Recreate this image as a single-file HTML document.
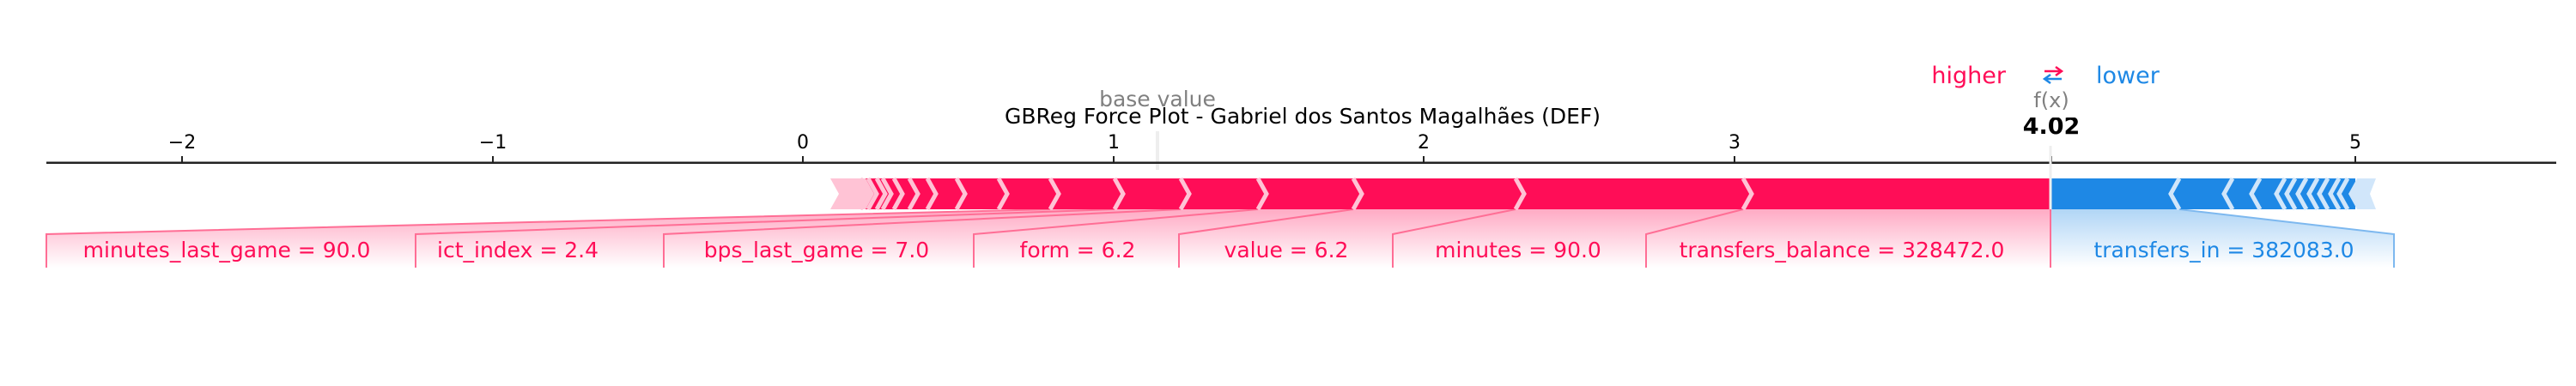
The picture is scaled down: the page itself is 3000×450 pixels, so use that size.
<!DOCTYPE html>
<html><head><meta charset="utf-8"><style>
html,body{margin:0;padding:0;background:#fff;}
svg{display:block;}
text{font-family:"DejaVu Sans","Liberation Sans",sans-serif;}
</style></head><body>
<svg width="3000" height="450" viewBox="0 0 3000 450" xmlns="http://www.w3.org/2000/svg">
<defs>
<linearGradient id="rg" gradientUnits="userSpaceOnUse" x1="0" y1="244" x2="0" y2="312">
<stop offset="0" stop-color="#ff0d57" stop-opacity="0.35"/><stop offset="1" stop-color="#ff0d57" stop-opacity="0"/></linearGradient>
<linearGradient id="bg" gradientUnits="userSpaceOnUse" x1="0" y1="244" x2="0" y2="312">
<stop offset="0" stop-color="#1e88e5" stop-opacity="0.35"/><stop offset="1" stop-color="#1e88e5" stop-opacity="0"/></linearGradient>
<clipPath id="cl"><rect x="2300" y="137" width="200" height="40"/></clipPath>
</defs>

<text x="2336" y="97" font-size="27" fill="#ff0d57" text-anchor="end">higher</text>
<text x="2441" y="97" font-size="27" fill="#1e88e5">lower</text>
<path d="M2381 83 H2400 M2394 78 L2401 83 L2394 88" stroke="#ff0d57" stroke-width="2.5" fill="none"/>
<path d="M2401 92 H2382 M2388 87 L2381 92 L2388 97" stroke="#1e88e5" stroke-width="2.5" fill="none"/>
<text x="2389" y="125" font-size="24" fill="#808080" text-anchor="middle">f(x)</text>
<text x="2389" y="156" font-size="27" font-weight="bold" fill="#000" text-anchor="middle" clip-path="url(#cl)">4.02</text>

<text x="1348" y="124" font-size="25" fill="#808080" text-anchor="middle">base value</text>
<text x="1517" y="144" font-size="25" fill="#000" text-anchor="middle" textLength="694" lengthAdjust="spacingAndGlyphs">GBReg Force Plot - Gabriel dos Santos Magalhães (DEF)</text>

<rect x="1346" y="153" width="4" height="45" fill="#eeeeee"/>

<rect x="54" y="188.5" width="2923" height="2.5" fill="#222"/>
<g stroke="#222" stroke-width="2">
<path d="M212 182V189M574 182V189M935 182V189M1297 182V189M1658 182V189M2020 182V189M2743 182V189M2389 182V189"/>
</g>
<g font-size="22" fill="#000" text-anchor="middle">
<text x="212" y="173">−2</text><text x="574" y="173">−1</text><text x="935" y="173">0</text>
<text x="1297" y="173">1</text><text x="1658" y="173">2</text><text x="2020" y="173">3</text><text x="2743" y="173">5</text>
</g>

<g fill="url(#rg)">
<polygon points="54,312 54,273 1223,244 1298,244 484,273 484,312"/>
<polygon points="484,312 484,273 1298,244 1375,244 773,273 773,312"/>
<polygon points="773,312 773,273 1375,244 1465,244 1134,273 1134,312"/>
<polygon points="1134,312 1134,273 1465,244 1576,244 1373,273 1373,312"/>
<polygon points="1373,312 1373,273 1576,244 1765,244 1622,273 1622,312"/>
<polygon points="1622,312 1622,273 1765,244 2030,244 1917,273 1917,312"/>
<polygon points="1917,312 1917,273 2030,244 2388,244 2388,312"/>
</g>
<polygon fill="url(#bg)" points="2388,244 2538,244 2788,273 2788,312 2388,312"/>
<g fill="none" stroke="#ff6e95" stroke-width="2">
<polyline points="1223,244 54,273 54,312"/>
<polyline points="1298,244 484,273 484,312"/>
<polyline points="1375,244 773,273 773,312"/>
<polyline points="1465,244 1134,273 1134,312"/>
<polyline points="1576,244 1373,273 1373,312"/>
<polyline points="1765,244 1622,273 1622,312"/>
<polyline points="2030,244 1917,273 1917,312"/>
<polyline points="2388,244 2388,312"/>
</g>
<polyline fill="none" stroke="#7db8ef" stroke-width="2" points="2538,244 2788,273 2788,312"/>

<rect x="990" y="208" width="1398" height="36" fill="#ff0d57"/>
<polygon points="967,208 1008,208 1018,226 1008,244 967,244 977,226" fill="#ffc3d5"/>
<rect x="2388" y="208" width="355" height="36" fill="#1e88e5"/>
<polygon points="2745,208 2767,208 2760,226 2767,244 2745,244 2735,226" fill="#d1e6fa"/>
<g fill="none" stroke="#ffc3d5" stroke-width="5">
<path d="M1002 208L1012 226L1002 244M1011 208L1021 226L1011 244M1021 208L1031 226L1021 244M1028 208L1038 226L1028 244M1041 208L1051 226L1041 244M1059 208L1069 226L1059 244M1080 208L1090 226L1080 244M1114 208L1124 226L1114 244M1163 208L1173 226L1163 244M1223 208L1233 226L1223 244M1298 208L1308 226L1298 244M1375 208L1385 226L1375 244M1465 208L1475 226L1465 244M1576 208L1586 226L1576 244M1765 208L1775 226L1765 244M2030 208L2040 226L2030 244"/>
</g>
<g fill="none" stroke="#d1e6fa" stroke-width="5">
<path d="M2538 208L2528 226L2538 244M2600 208L2590 226L2600 244M2632 208L2622 226L2632 244M2661 208L2651 226L2661 244M2673 208L2663 226L2673 244M2686 208L2676 226L2686 244M2699 208L2689 226L2699 244M2711 208L2701 226L2711 244M2724 208L2714 226L2724 244M2734 208L2724 226L2734 244"/>
</g>
<rect x="2386.5" y="170" width="3" height="74" fill="#eeeeee"/>

<g font-size="25" fill="#ff0d57" text-anchor="middle">
<text x="264" y="300">minutes_last_game = 90.0</text>
<text x="603" y="300">ict_index = 2.4</text>
<text x="951" y="300">bps_last_game = 7.0</text>
<text x="1255" y="300">form = 6.2</text>
<text x="1498" y="300">value = 6.2</text>
<text x="1768" y="300">minutes = 90.0</text>
<text x="2145" y="300">transfers_balance = 328472.0</text>
</g>
<text x="2590" y="300" font-size="25" fill="#1e88e5" text-anchor="middle">transfers_in = 382083.0</text>
</svg>
</body></html>
